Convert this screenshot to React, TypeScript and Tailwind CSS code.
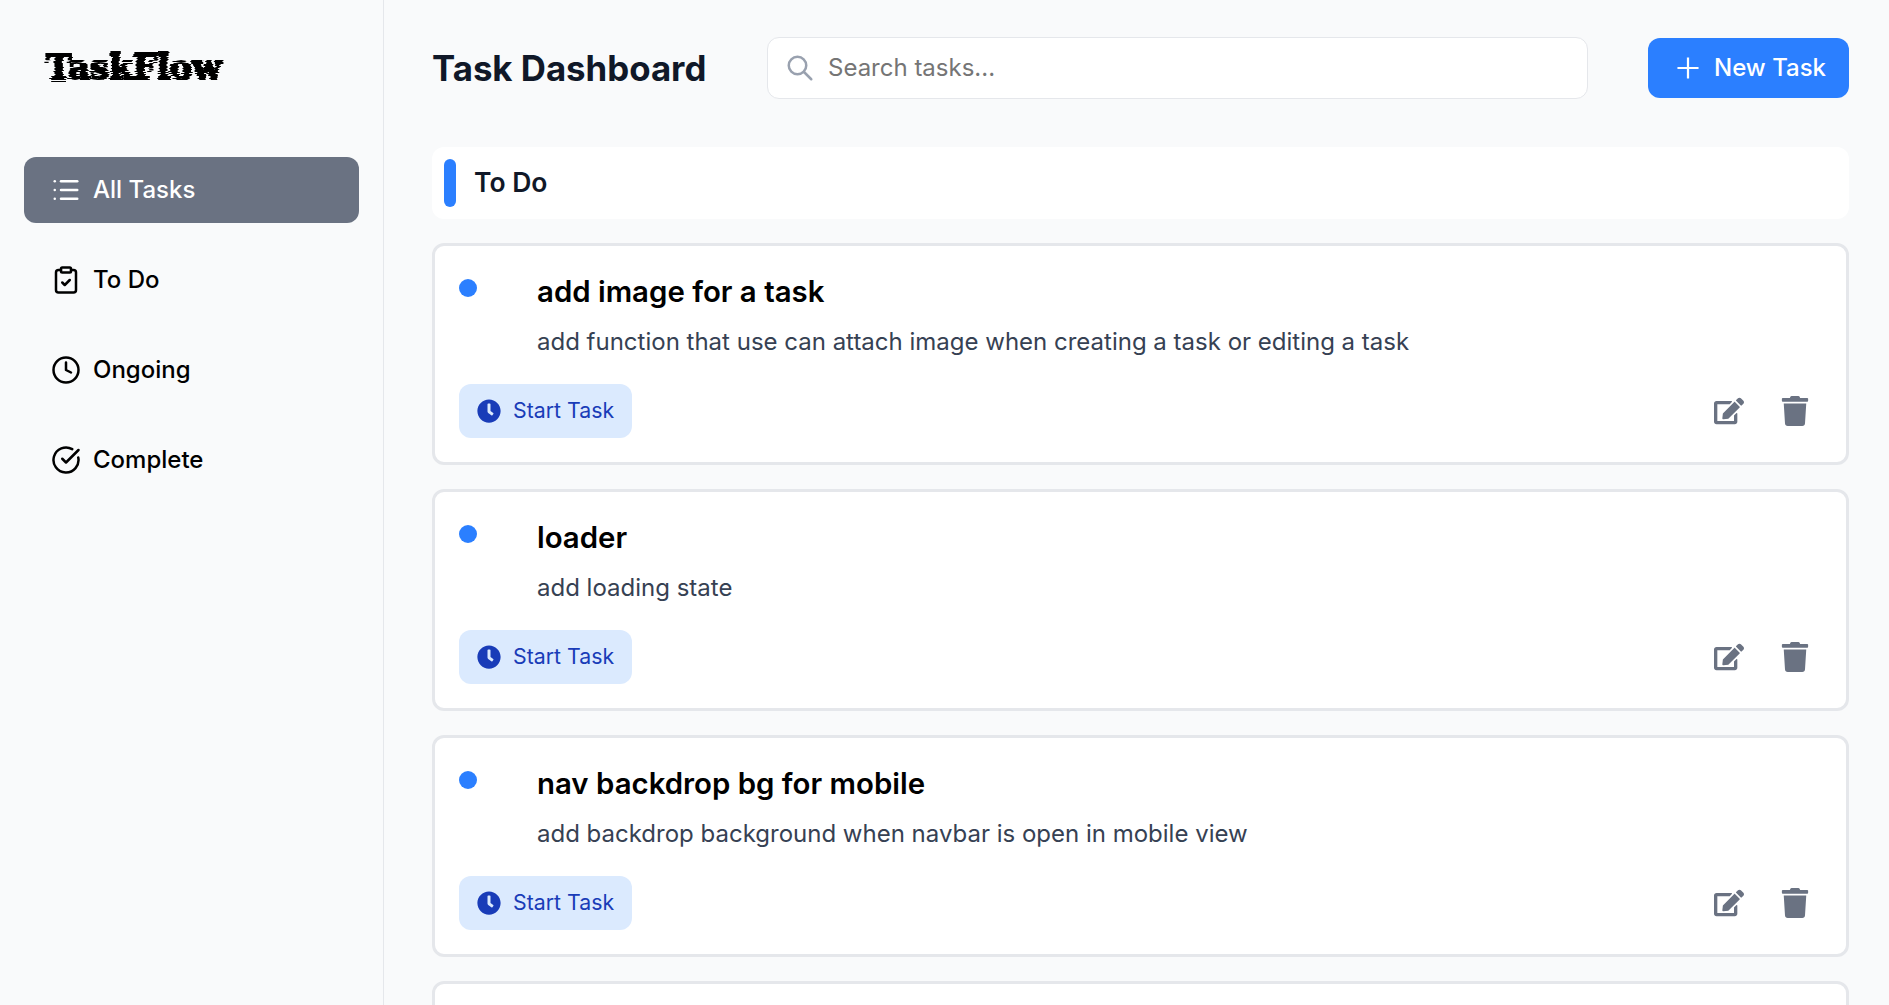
import React from 'react';
import { CircleCheckBig, ClipboardCheck, Clock, List } from 'lucide-react';
import { AiOutlinePlus } from 'react-icons/ai';
import { FaClock, FaEdit, FaTrash } from 'react-icons/fa';
import { HiOutlineSearch } from 'react-icons/hi';

const navItems = [
  { label: 'All Tasks', icon: List, active: true },
  { label: 'To Do', icon: ClipboardCheck, active: false },
  { label: 'Ongoing', icon: Clock, active: false },
  { label: 'Complete', icon: CircleCheckBig, active: false },
];

const tasks = [
  { title: 'add image for a task', description: 'add function that use can attach image when creating a task or editing a task' },
  { title: 'loader', description: 'add loading state' },
  { title: 'nav backdrop bg for mobile', description: 'add backdrop background when navbar is open in mobile view' },
];

const TaskCard: React.FC<{ title: string; description: string }> = ({ title, description }) => {
  return (
    <div className="h-[222px] shrink-0 rounded-xl border-[3px] border-gray-200 bg-white px-6 pt-6">
      <div className="flex items-start">
        <span className="mt-[9px] h-[18px] w-[18px] shrink-0 rounded-full bg-blue-500" />
        <div className="ml-[60px]">
          <h3 className="mt-1 text-[29.4px] leading-[36px] font-semibold text-black">{title}</h3>
          <p className="mt-4 text-[24px] leading-8 text-gray-700">{description}</p>
        </div>
      </div>
      <div className="mt-[26px] flex items-center justify-between">
        <button className="flex h-[54px] w-[173px] items-center rounded-xl bg-blue-100 pl-[18px] text-[21.3px] text-blue-800">
          <FaClock className="mr-3 h-6 w-6" />
          Start Task
        </button>
        <div className="flex items-center gap-9 pr-3 text-gray-500">
          <FaEdit className="h-[30px] w-[30px]" />
          <FaTrash className="h-[30px] w-[30px]" />
        </div>
      </div>
    </div>
  );
};

export default function App() {
  return (
    <div className="flex h-screen overflow-hidden bg-gray-50 font-['Inter',sans-serif]">
      <svg className="absolute h-0 w-0">
        <filter id="glitch">
          <feTurbulence type="fractalNoise" baseFrequency="0.002 0.7" numOctaves="2" seed="4" />
          <feDisplacementMap in="SourceGraphic" scale="9" xChannelSelector="R" yChannelSelector="A" />
        </filter>
      </svg>

      <aside className="w-[384px] shrink-0 border-r border-gray-200 px-6">
        <div className="flex h-[157px] items-start pt-[47px] pl-[22px]">
          <span className="font-['DejaVu_Serif',serif] text-[34px] leading-[40px] font-bold text-black [filter:url(#glitch)] [-webkit-text-stroke:2px_black]">
            TaskFlow
          </span>
        </div>
        <nav className="flex flex-col gap-6">
          {navItems.map(({ label, icon: Icon, active }) => (
            <a
              key={label}
              className={
                active
                  ? 'flex h-[66px] items-center rounded-xl bg-gray-500 pl-[27px] text-[24px] font-[450] text-white'
                  : 'flex h-[66px] items-center rounded-xl pl-[27px] text-[24px] font-[450] text-black'
              }
            >
              <Icon className="mr-3 h-[30px] w-[30px]" strokeWidth={2} />
              {label}
            </a>
          ))}
        </nav>
      </aside>

      <main className="min-w-0 flex-1 pr-10 pl-12">
        <header className="flex h-[147px] items-start pt-[37px]">
          <h1 className="mt-[9px] w-[335px] shrink-0 text-[34.8px] leading-[44px] font-bold text-gray-900">Task Dashboard</h1>
          <div className="flex h-[62px] w-[821px] shrink-0 items-center rounded-xl border border-gray-200 bg-white pl-[17px]">
            <HiOutlineSearch className="mr-[13px] h-[30px] w-[30px] text-gray-400" />
            <input
              placeholder="Search tasks..."
              className="min-w-0 flex-1 bg-transparent text-[24px] outline-none placeholder:text-[#757575]"
            />
          </div>
          <button className="mt-px ml-auto flex h-[60px] w-[201px] items-center rounded-xl bg-blue-500 pl-[25px] text-[24px] font-medium text-white">
            <AiOutlinePlus className="mr-[11px] h-[30px] w-[30px]" />
            New Task
          </button>
        </header>

        <div className="flex h-[72px] items-center rounded-xl bg-white pl-3">
          <span className="h-12 w-3 rounded-full bg-blue-500" />
          <h2 className="ml-[18px] text-[26.5px] font-semibold text-gray-900">To Do</h2>
        </div>

        <div className="mt-6 flex flex-col gap-6">
          {tasks.map((task) => (
            <TaskCard key={task.title} title={task.title} description={task.description} />
          ))}
          <div className="h-[222px] shrink-0 rounded-xl border-[3px] border-gray-200 bg-white" />
        </div>
      </main>
    </div>
  );
}
